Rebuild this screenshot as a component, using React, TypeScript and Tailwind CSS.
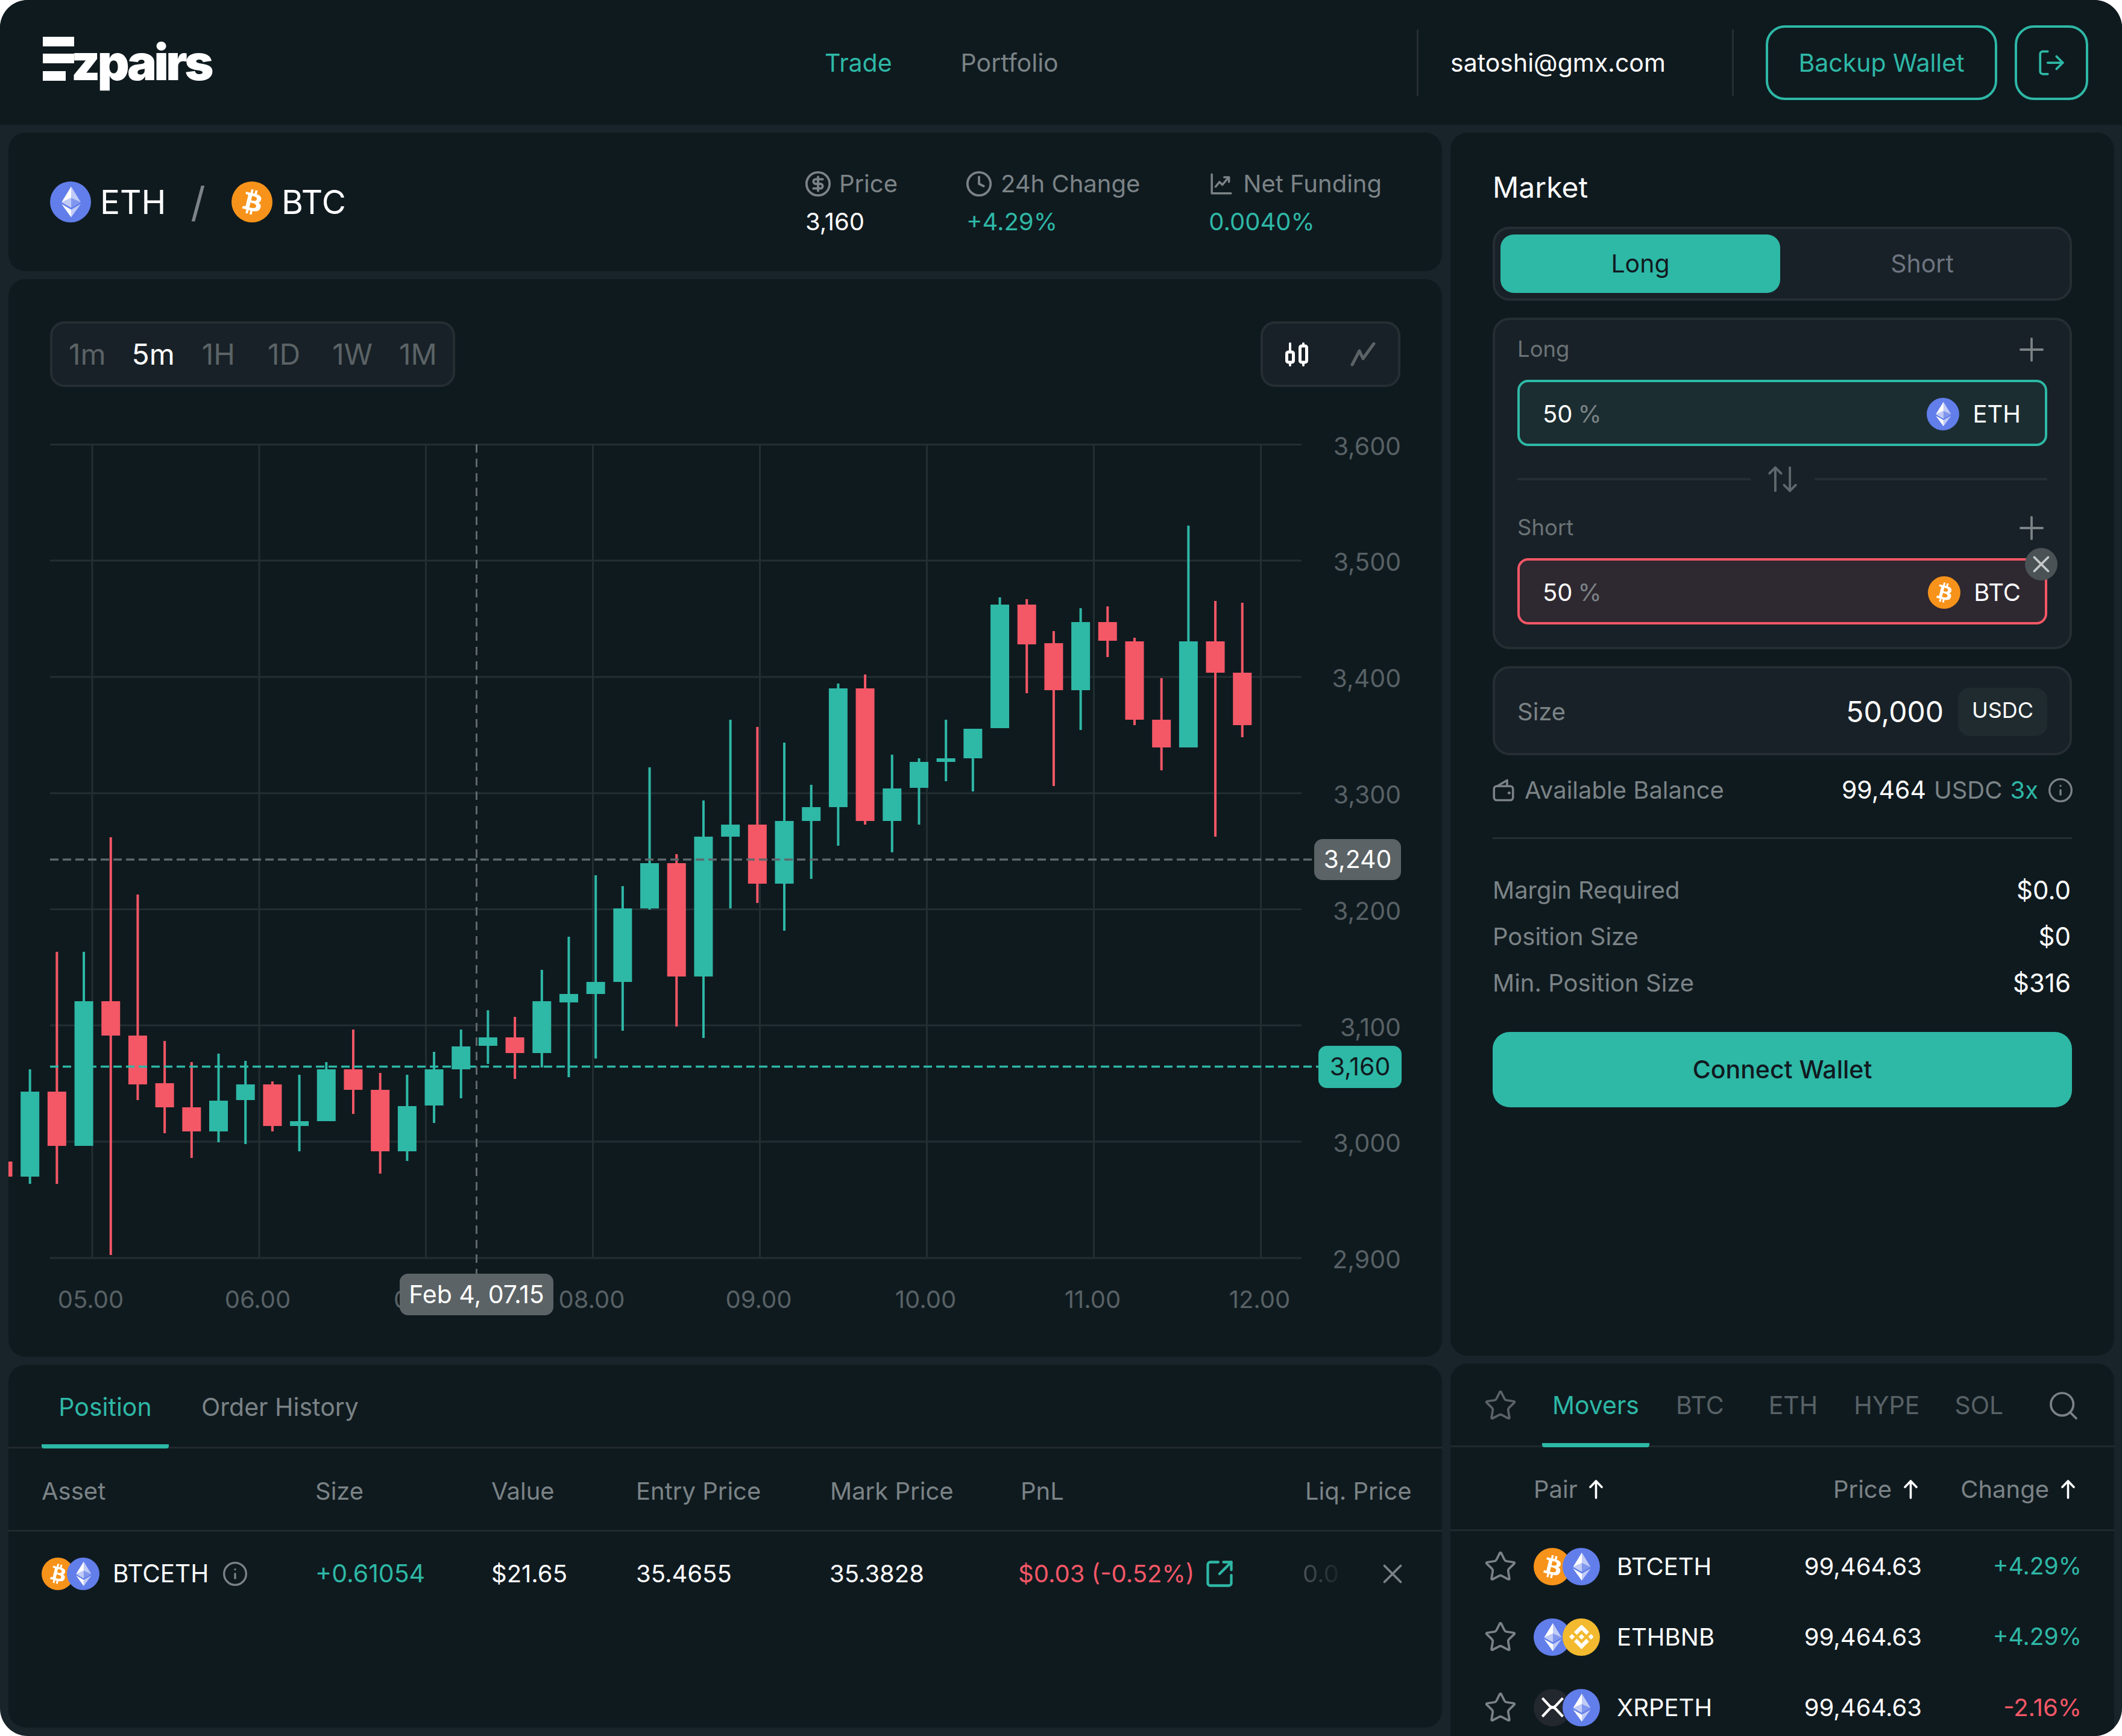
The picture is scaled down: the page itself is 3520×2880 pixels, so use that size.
import { ArrowUpDown, CircleDollarSign, Clock, Info, LogOut, Plus, Search, SquareArrowOutUpRight, Star, X } from 'lucide-react';
import { SiBinance } from 'react-icons/si';

// [isUp, bodyTop, bodyBottom, wickTop, wickBottom], in page pixels
const CANDLES: [boolean, number, number, number, number][] = [
  [false, 1927, 1952, 1927, 1952],
  [true, 1811, 1952, 1774, 1964],
  [false, 1811, 1901, 1579, 1964],
  [true, 1661, 1901, 1579, 1901],
  [false, 1661, 1718, 1389, 2082],
  [false, 1718, 1799, 1484, 1825],
  [false, 1797, 1837, 1727, 1880],
  [false, 1837, 1877, 1762, 1921],
  [true, 1826, 1877, 1748, 1895],
  [true, 1799, 1825, 1760, 1898],
  [false, 1799, 1868, 1794, 1877],
  [true, 1860, 1868, 1783, 1910],
  [true, 1774, 1860, 1762, 1860],
  [false, 1774, 1808, 1708, 1848],
  [false, 1808, 1910, 1780, 1947],
  [true, 1835, 1910, 1783, 1926],
  [true, 1774, 1834, 1745, 1863],
  [true, 1736, 1774, 1708, 1822],
  [true, 1721, 1735, 1676, 1765],
  [false, 1721, 1747, 1687, 1790],
  [true, 1661, 1747, 1609, 1771],
  [true, 1649, 1663, 1554, 1787],
  [true, 1629, 1649, 1452, 1756],
  [true, 1507, 1629, 1470, 1710],
  [true, 1432, 1507, 1273, 1509],
  [false, 1432, 1620, 1417, 1703],
  [true, 1388, 1620, 1328, 1722],
  [true, 1368, 1388, 1194, 1507],
  [false, 1368, 1466, 1206, 1498],
  [true, 1362, 1466, 1232, 1544],
  [true, 1339, 1362, 1302, 1458],
  [true, 1142, 1339, 1134, 1403],
  [false, 1142, 1362, 1119, 1368],
  [true, 1308, 1362, 1252, 1414],
  [true, 1264, 1307, 1258, 1368],
  [true, 1258, 1264, 1194, 1296],
  [true, 1209, 1258, 1209, 1313],
  [true, 1003, 1208, 991, 1208],
  [false, 1003, 1069, 994, 1150],
  [false, 1067, 1145, 1047, 1304],
  [true, 1032, 1145, 1009, 1211],
  [false, 1032, 1063, 1006, 1090],
  [false, 1064, 1194, 1058, 1203],
  [false, 1194, 1240, 1125, 1278],
  [true, 1064, 1240, 872, 1240],
  [false, 1064, 1116, 997, 1388],
  [false, 1116, 1203, 1000, 1223],
];

const PRICES = ['3,600', '3,500', '3,400', '3,300', '3,200', '3,100', '3,000', '2,900'];
const HOURS = ['05.00', '06.00', '07.00', '08.00', '09.00', '10.00', '11.00', '12.00'];
const GRID_Y = [737.5, 930, 1123, 1316, 1508.5, 1701, 1894, 2087];
const GRID_X = [153, 430, 706.5, 983.5, 1260.5, 1537.5, 1814.5, 2091.5];

function Eth({ size }: { size: number }) {
  return (
    <svg width={size} height={size} viewBox="0 0 32 32" className="shrink-0 block">
      <circle cx="16" cy="16" r="16" fill="#627EEA" />
      <g fill="#fff">
        <path fillOpacity=".6" d="M16.5 4v8.87l7.5 3.35z" />
        <path d="M16.5 4L9 16.22l7.5-3.35z" />
        <path fillOpacity=".6" d="M16.5 21.97V28L24 17.62z" />
        <path d="M16.5 28v-6.03L9 17.62z" />
        <path fillOpacity=".2" d="M16.5 20.57l7.5-4.35-7.5-3.35z" />
        <path fillOpacity=".6" d="M9 16.22l7.5 4.35v-7.7z" />
      </g>
    </svg>
  );
}

function Btc({ size }: { size: number }) {
  return (
    <svg width={size} height={size} viewBox="0 0 32 32" className="shrink-0 block">
      <circle cx="16" cy="16" r="16" fill="#F7931A" />
      <path
        fill="#fff"
        d="M23.189 14.02c.314-2.096-1.283-3.223-3.465-3.975l.708-2.84-1.728-.43-.69 2.765c-.454-.114-.92-.22-1.385-.326l.695-2.783L15.596 6l-.708 2.839c-.376-.086-.746-.17-1.104-.26l.002-.009-2.384-.595-.46 1.846s1.283.294 1.256.312c.7.175.826.638.805 1.006l-.806 3.235c.048.012.11.03.18.057l-.183-.045-1.13 4.532c-.086.212-.303.531-.793.41.018.025-1.256-.313-1.256-.313l-.858 1.978 2.25.561c.418.105.828.215 1.231.318l-.715 2.872 1.727.43.708-2.84c.472.127.93.245 1.378.357l-.706 2.828 1.728.43.715-2.866c2.948.558 5.164.333 6.097-2.333.752-2.146-.037-3.385-1.588-4.192 1.13-.26 1.98-1.003 2.207-2.538zm-3.95 5.538c-.533 2.147-4.148.986-5.32.695l.95-3.805c1.172.293 4.929.872 4.37 3.11zm.535-5.569c-.487 1.953-3.495.96-4.47.717l.86-3.45c.975.243 4.118.696 3.61 2.733z"
      />
    </svg>
  );
}

function Bnb({ size }: { size: number }) {
  return (
    <div className="shrink-0 rounded-full bg-[#f3ba2f] flex items-center justify-center text-white" style={{ width: size, height: size }}>
      <SiBinance size={size * 0.66} />
    </div>
  );
}

function Xrp({ size }: { size: number }) {
  return (
    <div className="shrink-0 rounded-full bg-[#23272e] flex items-center justify-center" style={{ width: size, height: size }}>
      <svg width={size * 0.66} height={size * 0.66} viewBox="0 0 24 24" fill="none" stroke="#fff" strokeWidth="2.5">
        <path d="M2 3l7 7.5q3 3 6 0L22 3" />
        <path d="M2 21l7-7.5q3-3 6 0l7 7.5" />
      </svg>
    </div>
  );
}

function CandleIcon() {
  return (
    <svg width="40" height="40" viewBox="0 0 40 40" fill="none" stroke="#fff" strokeWidth="5" strokeLinecap="round">
      <path d="M9 2v14M9 33v5M31 2v4M31 33v5" strokeWidth="4" />
      <rect x="3.5" y="16" width="11" height="17" rx="2.5" />
      <rect x="25.5" y="6" width="11" height="27" rx="2.5" />
    </svg>
  );
}

function LineIcon() {
  return (
    <svg width="42" height="40" viewBox="0 0 42 40" fill="none" stroke="#5b6366" strokeWidth="5" strokeLinecap="round" strokeLinejoin="round">
      <path d="M3 37L15 14l6 13L39 2" />
    </svg>
  );
}

function FundingIcon() {
  return (
    <svg width="38" height="38" viewBox="0 0 24 24" fill="none" stroke="#7b8386" strokeWidth="2.2" strokeLinecap="round" strokeLinejoin="round">
      <path d="M2 2v20h20" />
      <path d="M6 15l4-5 3 3 6-7" />
      <path d="M15 5h5v5" />
    </svg>
  );
}

function WalletIcon() {
  return (
    <svg width="36" height="38" viewBox="0 0 24 25" fill="none" stroke="#7b8386" strokeWidth="2.4" strokeLinecap="round" strokeLinejoin="round">
      <rect x="1.5" y="8" width="21" height="15.5" rx="3" />
      <path d="M5 8l11-6.5V8" />
      <path d="M18 15.5h.5" strokeWidth="3" />
    </svg>
  );
}

function SortArrow() {
  return (
    <svg width="25" height="32" viewBox="0 0 25 32" fill="none" stroke="#fff" strokeWidth="3.6" strokeLinecap="round" strokeLinejoin="round" className="shrink-0">
      <path d="M12.5 30V3M3 12l9.5-10L22 12" />
    </svg>
  );
}

function Logo() {
  return (
    <div className="flex items-start self-start mt-[61px] w-[282px] text-white">
      <svg width="52" height="73" viewBox="0 0 52 73" className="shrink-0" fill="#fff">
        <rect x="0" y="0" width="66" height="16" />
        <rect x="0" y="28" width="52" height="16" />
        <rect x="0" y="57" width="38" height="16" />
      </svg>
      <span className="-ml-[5px] mt-[2px] text-[82px] leading-none font-black tracking-[-0.055em]">zpairs</span>
    </div>
  );
}

function Stat({ icon, label, gap, value, tone }: { icon: React.ReactNode; label: string; gap: string; value: string; tone: string }) {
  return (
    <div className="flex flex-col pt-[3px] gap-[15px]">
      <div className={`flex items-center text-[40px] leading-[48px] text-[#7b8386] ${gap}`}>
        {icon}
        <span>{label}</span>
      </div>
      <div className={`-ml-[2px] text-[40px] leading-[48px] ${tone}`}>{value}</div>
    </div>
  );
}

function Chart() {
  return (
    <div className="relative w-[2378px] h-[1478px]">
      <svg width="2378" height="1478" viewBox="14 642 2378 1478" className="block">
        {GRID_Y.map(y => (
          <line key={y} x1="83" x2="2159" y1={y} y2={y} stroke="#232e33" strokeWidth="3" />
        ))}
        {GRID_X.map(x => (
          <line key={x} x1={x} x2={x} y1="737" y2="2087" stroke="#232e33" strokeWidth="3" />
        ))}
        {CANDLES.map(([up, top, bottom, wickTop, wickBottom], i) => {
          const x = 5 + i * 44.69;
          const color = up ? '#2eb8a6' : '#f45766';
          return (
            <g key={i} fill={color}>
              <rect x={x - 2} y={wickTop} width="4" height={wickBottom - wickTop} />
              <rect x={x - 15.5} y={top} width="31" height={bottom - top} />
            </g>
          );
        })}
        <line x1="83" x2="2180" y1="1426" y2="1426" stroke="#5f686c" strokeWidth="3.5" strokeDasharray="14 7" />
        <line x1="83" x2="2187" y1="1769.5" y2="1769.5" stroke="#2eb8a6" strokeWidth="3.5" strokeDasharray="14 7" />
        <line x1="790.5" x2="790.5" y1="737" y2="2114" stroke="#5f686c" strokeWidth="3" strokeDasharray="14 10" />
      </svg>
      <div className="absolute right-[68px] top-[2px] flex flex-col items-end text-[41px] text-[#586165]">
        {PRICES.map(p => (
          <div key={p} className="h-[192.8px] flex items-center">{p}</div>
        ))}
      </div>
      <div className="absolute left-[2166px] top-[750px] w-[144px] h-[68px] rounded-[14px] bg-[#5b6366] flex items-center justify-center text-[41px] text-white">3,240</div>
      <div className="absolute left-[2173px] top-[1093px] w-[138px] h-[70px] rounded-[14px] bg-[#2eb8a6] flex items-center justify-center text-[41px] text-[#0f1a1f]">3,160</div>
      <div className="absolute left-[649px] top-[1471px] w-[255px] h-[69px] rounded-[14px] bg-[#5b6366] flex items-center justify-center text-[41px] text-white z-10">Feb 4, 07.15</div>
    </div>
  );
}

const Card = 'bg-[#0f1a1f] rounded-[28px]';
const BoxLine = 'bg-[#182127] border-[4px] border-[#252e32]';

function Leg({ label, coin, name, tone }: { label: string; coin: React.ReactNode; name: string; tone: string }) {
  return (
    <>
      <div className="h-[40px] flex items-center justify-between">
        <span className="text-[36.5px] text-[#6b7376]">{label}</span>
        <Plus size={62} strokeWidth={1.5} className="text-[#7b8386] -mt-[9px] -mb-[11px] -mr-[5px]" />
      </div>
      <div className={`relative mt-[31px] h-[110px] rounded-[18px] border-[4px] pl-[38px] pr-[40px] pt-[4px] flex items-center justify-between text-[40px] text-white ${tone}`}>
        <div className="flex items-center gap-[9px]">
          <span>50</span>
          <span className="text-[#7b8386]">%</span>
        </div>
        <div className="flex items-center gap-[22px]">
          {coin}
          <span>{name}</span>
        </div>
        {label === 'Short' && (
          <div className="absolute -top-[21px] -right-[21px] w-[54px] h-[54px] rounded-full bg-[#4a5256] flex items-center justify-center">
            <X size={46} strokeWidth={2} className="text-[#c5c9ca]" />
          </div>
        )}
      </div>
    </>
  );
}

function Market() {
  return (
    <div className={`${Card} h-[2029px] px-[70px] pt-[66px]`}>
      <div className="text-[48px] leading-[50px] text-white">Market</div>
      <div className={`${BoxLine} mt-[40px] h-[123px] rounded-[28px] p-[9px] grid grid-cols-[464px_1fr] text-[41px]`}>
        <div className="rounded-[22px] bg-[#2eb8a6] flex items-center justify-center text-[#10191f]">Long</div>
        <div className="flex items-center justify-center text-[#6d7480]">Short</div>
      </div>
      <div className={`${BoxLine} mt-[28px] rounded-[28px] px-[37px] pt-[28px] pb-[37px]`}>
        <Leg label="Long" coin={<Eth size={54} />} name="ETH" tone="bg-[#1b2d31] border-[#2eb8a6]" />
        <div className="h-[110px] flex items-center gap-[24px]">
          <div className="flex-1 h-[4px] bg-[#252e32]" />
          <ArrowUpDown size={58} strokeWidth={1.6} className="text-[#5f686c]" />
          <div className="flex-1 h-[4px] bg-[#252e32]" />
        </div>
        <div className="mt-[5px]" />
        <Leg label="Short" coin={<Btc size={54} />} name="BTC" tone="bg-[#2e2830] border-[#f45766]" />
      </div>
      <div className={`${BoxLine} mt-[28px] h-[148px] rounded-[28px] pl-[37px] pr-[37px] pt-[3px] flex items-center justify-between`}>
        <span className="text-[40px] text-[#7b8386]">Size</span>
        <div className="flex items-center gap-[24px]">
          <span className="text-[48px] text-white">50,000</span>
          <span className="w-[148px] h-[80px] pb-[5px] rounded-[20px] bg-[#202b30] flex items-center justify-center text-[36px] text-white">USDC</span>
        </div>
      </div>
      <div className="mt-[38px] h-[40px] flex items-center justify-between text-[40px]">
        <div className="flex items-center gap-[17px] text-[#7b8386]">
          <WalletIcon />
          <span>Available Balance</span>
        </div>
        <div className="flex items-center gap-[13px]">
          <span className="text-white text-[41px]">99,464</span>
          <span className="text-[#7b8386]">USDC</span>
          <span className="text-[#2eb8a6]">3x</span>
          <Info size={44} strokeWidth={1.8} className="text-[#7b8386] ml-[2px] -mr-[3px]" />
        </div>
      </div>
      <div className="mt-[58px] h-[3px] bg-[#252e32]" />
      <div className="mt-[46px] text-[40px]">
        {[['Margin Required', '$0.0'], ['Position Size', '$0'], ['Min. Position Size', '$316']].map(([k, v]) => (
          <div key={k} className="h-[77px] flex items-center justify-between">
            <span className="text-[#7b8386]">{k}</span>
            <span className="text-white text-[42px] mr-[2px]">{v}</span>
          </div>
        ))}
      </div>
      <div className="mt-[43px] h-[125px] rounded-[28px] bg-[#2eb8a6] flex items-center justify-center text-[41px] font-medium text-[#10191f]">Connect Wallet</div>
    </div>
  );
}

const MOVERS = [
  { a: <Btc size={62} />, b: <Eth size={62} />, name: 'BTCETH', change: '+4.29%', tone: 'text-[#2eb8a6] text-[39px]' },
  { a: <Eth size={62} />, b: <Bnb size={62} />, name: 'ETHBNB', change: '+4.29%', tone: 'text-[#2eb8a6] text-[39px]' },
  { a: <Xrp size={62} />, b: <Eth size={62} />, name: 'XRPETH', change: '-2.16%', tone: 'text-[#f45766]' },
];

function Movers() {
  return (
    <div className={`${Card} h-[660px] mt-[13px] text-[40px]`}>
      <div className="h-[139px] border-b-[3px] border-[#20292e] pl-[59px] pr-[60px] flex items-center text-[#586165] text-[41px]">
        <Star size={56} strokeWidth={1.6} className="text-[#5b6366] -mx-[4px] mt-[3px] shrink-0" />
        <div className="ml-[45px] h-[139px] -mb-[3px] w-[178px] border-b-[7px] border-[#2eb8a6] rounded-b-[4px] pt-[8px] flex items-center justify-center text-[#2eb8a6]">Movers</div>
        <span className="ml-[44px] pt-[4px]">BTC</span>
        <span className="ml-[74px] pt-[4px]">ETH</span>
        <span className="ml-[60px] pt-[4px]">HYPE</span>
        <span className="ml-[58px] pt-[4px]">SOL</span>
        <Search size={56} strokeWidth={1.6} className="ml-auto mt-[3px] text-[#7b8386] -mr-[4px]" />
      </div>
      <div className="h-[139px] pt-[3px] border-b-[3px] border-[#20292e] grid grid-cols-[138px_356px_288px_265px] items-center text-[#7b8386]">
        <div />
        <div className="flex items-center gap-[18px]">
          Pair
          <SortArrow />
        </div>
        <div className="pr-[6px] flex items-center justify-end gap-[19px]">
          Price
          <SortArrow />
        </div>
        <div className="pr-[10px] flex items-center justify-end gap-[19px]">
          Change
          <SortArrow />
        </div>
      </div>
      {MOVERS.map(m => (
        <div key={m.name} className="h-[117px] grid grid-cols-[138px_356px_288px_265px] items-center text-white">
          <div className="pl-[59px]">
            <Star size={56} strokeWidth={1.6} className="text-[#7b8386] -mx-[4px]" />
          </div>
          <div className="flex items-center">
            {m.a}
            <div className="-ml-[14px]">{m.b}</div>
            <span className="ml-[28px]">{m.name}</span>
          </div>
          <div className="text-right">99,464.63</div>
          <div className={`text-right ${m.tone}`}>{m.change}</div>
        </div>
      ))}
    </div>
  );
}

function Positions() {
  return (
    <div className={`${Card} h-[602px] mt-[13px] text-[40px]`}>
      <div className="h-[139px] border-b-[3px] border-[#20292e] pl-[55px] flex items-stretch text-[41px]">
        <div className="h-[139px] w-[211px] border-b-[7px] border-[#2eb8a6] rounded-b-[4px] pt-[10px] flex items-center justify-center text-[#2eb8a6]">Position</div>
        <div className="ml-[54px] pt-[6px] flex items-center text-[#7b8386]">Order History</div>
      </div>
      <div className="h-[138px] pt-[6px] border-b-[3px] border-[#20292e] pl-[55px] grid grid-cols-[454px_292px_240px_322px_316px_472px_1fr] items-center text-[#7b8386]">
        {['Asset', 'Size', 'Value', 'Entry Price', 'Mark Price', 'PnL', 'Liq. Price'].map(h => (
          <div key={h}>{h}</div>
        ))}
      </div>
      <div className="h-[136px] pt-[4px] pl-[55px] grid grid-cols-[454px_292px_240px_321px_313px_472px_1fr] items-center text-white">
        <div className="flex items-center">
          <Btc size={54} />
          <div className="-ml-[12px]"><Eth size={54} /></div>
          <span className="ml-[22px] text-[40.5px]">BTCETH</span>
          <Info size={44} strokeWidth={1.8} className="ml-[22px] text-[#7b8386]" />
        </div>
        <div className="text-[41px] text-[#2eb8a6]">+0.61054</div>
        <div>$21.65</div>
        <div>35.4655</div>
        <div>35.3828</div>
        <div className="flex items-center gap-[16px] text-[#f45766]">
          $0.03 (-0.52%)
          <SquareArrowOutUpRight size={52} strokeWidth={2} className="text-[#2eb8a6]" />
        </div>
        <div className="flex items-center">
          <span className="bg-linear-to-r from-[#4a5256] to-[#1b262b] bg-clip-text text-transparent">0.0</span>
          <X size={54} strokeWidth={1.7} className="ml-[62px] text-[#7b8386]" />
        </div>
      </div>
    </div>
  );
}

export default function App() {
  return (
    <div className="w-[3520px] h-[2880px] bg-white font-[Inter,sans-serif]">
      <div className="w-full h-full rounded-[46px] overflow-hidden bg-[#19242a] flex flex-col">
        <header className="h-[207px] shrink-0 bg-[#0f1a1f] pl-[71px] pr-[56px] flex items-center text-[41px]">
          <Logo />
          <nav className="ml-[1015px] pt-[3px] flex gap-[114px]">
            <span className="text-[#2eb8a6]">Trade</span>
            <span className="text-[#7b8386]">Portfolio</span>
          </nav>
          <div className="ml-auto w-[3px] h-[110px] bg-[#242d32]" />
          <span className="ml-[53px] pt-[3px] w-[467px] text-white">satoshi@gmx.com</span>
          <div className="w-[3px] h-[110px] bg-[#242d32]" />
          <div className="ml-[53px] pt-[3px] w-[384px] h-[124px] rounded-[32px] border-[4px] border-[#2eb8a6] flex items-center justify-center text-[#2eb8a6]">Backup Wallet</div>
          <div className="ml-[29px] w-[122px] h-[124px] rounded-[32px] border-[4px] border-[#2eb8a6] flex items-center justify-center text-[#2eb8a6]">
            <LogOut size={50} strokeWidth={1.8} />
          </div>
        </header>
        <main className="flex-1 pt-[13px] pl-[14px] pr-[13px] flex gap-[14px] overflow-hidden">
          <div className="w-[2378px] shrink-0">
            <div className={`${Card} h-[230px] pl-[69px] pr-[100px] flex items-center justify-between`}>
              <div className="flex items-center text-[55px] text-white">
                <Eth size={68} />
                <span className="ml-[15px] w-[107px]">ETH</span>
                <span className="w-[111px] text-center text-[68px] text-[#7d8487]">/</span>
                <Btc size={68} />
                <span className="ml-[15px]">BTC</span>
              </div>
              <div className="flex gap-[116px]">
                <Stat icon={<CircleDollarSign size={46} strokeWidth={2} className="text-[#7b8386] -m-[4px]" />} gap="gap-[16px]" label="Price" value="3,160" tone="text-white" />
                <Stat icon={<Clock size={46} strokeWidth={2} className="text-[#7b8386] -m-[4px]" />} gap="gap-[17px]" label="24h Change" value="+4.29%" tone="text-[#2eb8a6]" />
                <Stat icon={<FundingIcon />} gap="gap-[17px]" label="Net Funding" value="0.0040%" tone="text-[#2eb8a6]" />
              </div>
            </div>
            <div className={`${Card} h-[1788px] mt-[13px] overflow-hidden`}>
              <div className="pt-[70px] px-[69px] flex justify-between">
                <div className={`${BoxLine} w-[672px] h-[109px] rounded-[24px] pl-[27px] flex items-center text-[48px] text-[#5b6366]`}>
                  <span>1m</span>
                  <span className="ml-[43px] text-white">5m</span>
                  <span className="ml-[45px]">1H</span>
                  <span className="ml-[54px]">1D</span>
                  <span className="ml-[53px]">1W</span>
                  <span className="ml-[44px]">1M</span>
                </div>
                <div className={`${BoxLine} w-[232px] h-[109px] rounded-[24px] pl-[36px] pr-[37px] flex items-center justify-between`}>
                  <CandleIcon />
                  <LineIcon />
                </div>
              </div>
              <Chart />
              <div className="h-[70px] pt-[2px] -ml-[2px] grid grid-cols-[repeat(8,277px)] text-[40px] text-[#586165] text-center items-center">
                {HOURS.map(h => (
                  <div key={h}>{h}</div>
                ))}
              </div>
            </div>
            <Positions />
          </div>
          <div className="flex-1">
            <Market />
            <Movers />
          </div>
        </main>
      </div>
    </div>
  );
}
